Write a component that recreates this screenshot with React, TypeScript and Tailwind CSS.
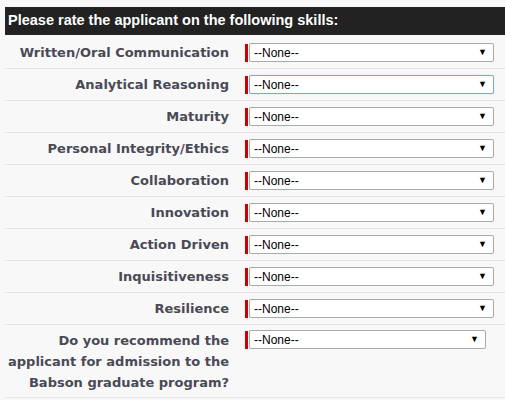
import React from 'react';

const skills = [
  'Written/Oral Communication',
  'Analytical Reasoning',
  'Maturity',
  'Personal Integrity/Ethics',
  'Collaboration',
  'Innovation',
  'Action Driven',
  'Inquisitiveness',
  'Resilience',
];

const Picklist: React.FC<{ focused?: boolean; width?: string }> = ({ focused = false, width = 'w-[245px]' }) => (
  <div className="flex items-center">
    <div className="w-[3px] h-[18px] bg-[#c00] mr-[1px]" />
    <div
      className={`${width} h-[19px] bg-white rounded-[2px] border flex items-center justify-between pl-[4px] pr-[6px] text-[12px] text-black font-['Liberation_Sans',Arial,sans-serif] ${
        focused ? 'border-[#7ea6dc] shadow-[0_0_1px_#9ec0ea]' : 'border-[#a9a9a9]'
      }`}
    >
      <span>--None--</span>
      <span className="text-[9px] leading-none">▼</span>
    </div>
  </div>
);

export default function App() {
  return (
    <div className="bg-[#f8f8f8] w-[505px] h-[400px] pt-[7px] pl-[5px] overflow-hidden">
      <div className="h-[28px] bg-[#222] flex items-center pl-[3px] text-white font-bold text-[14.5px] font-['Liberation_Sans',Arial,sans-serif]">
        Please rate the applicant on the following skills:
      </div>
      <div className="h-[2px]" />
      {skills.map((s, i) => (
        <div key={s} className="h-[32px] flex items-center border-b border-[#e6e6e6]">
          <div className="w-[240px] pr-[16px] text-right text-[13px] font-bold text-[#4a4a56] font-['DejaVu_Sans',Verdana,sans-serif]">
            {s}
          </div>
          <Picklist focused={i === 1} />
        </div>
      ))}
      <div className="h-[73px] flex items-start border-b border-[#e6e6e6] pt-[5px]">
        <div className="w-[240px] pr-[16px] text-right text-[13px] leading-[21px] font-bold text-[#4a4a56] font-['DejaVu_Sans',Verdana,sans-serif]">
          Do you recommend the
          <br />
          applicant for admission to the
          <br />
          Babson graduate program?
        </div>
        <Picklist width="w-[237px]" />
      </div>
    </div>
  );
}
